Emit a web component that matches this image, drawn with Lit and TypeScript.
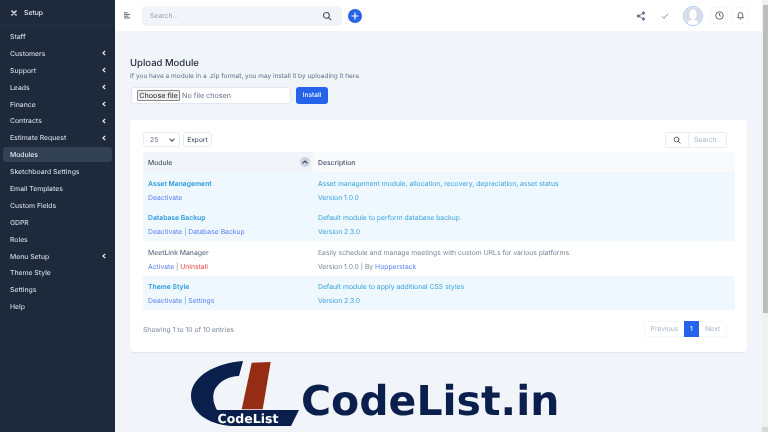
import { LitElement, css, html, svg } from 'lit';
import { customElement } from 'lit/decorators.js';

const menu: [string, boolean][] = [
  ['Staff', false],
  ['Customers', true],
  ['Support', true],
  ['Leads', true],
  ['Finance', true],
  ['Contracts', true],
  ['Estimate Request', true],
  ['Modules', false],
  ['Sketchboard Settings', false],
  ['Email Templates', false],
  ['Custom Fields', false],
  ['GDPR', false],
  ['Roles', false],
  ['Menu Setup', true],
  ['Theme Style', false],
  ['Settings', false],
  ['Help', false],
];

const searchIcon = (size: number) => html`<svg width=${size} height=${size} viewBox="0 0 24 24" fill="none" stroke="currentColor" stroke-width="2.6" stroke-linecap="round">
  <circle cx="10.5" cy="10.5" r="7"></circle><path d="M16 16l5.5 5.500"></path></svg>`;

@customElement('app-root')
export class AppRoot extends LitElement {
  renderSidebar() {
    return html`<aside class="side">
      <div class="side-head">
        <svg width="6" height="6" viewBox="0 0 10 10" stroke="#e2e8f0" stroke-width="2.4" stroke-linecap="round"><path d="M1.500 1.500l7 7M8.500 1.500l-7 7"></path></svg>
        <span>Setup</span>
      </div>
      <nav class="menu">
        ${menu.map(([label, sub]) => html`<div class="item ${label === 'Modules' ? 'on' : ''}">
          <span>${label}</span>
          ${sub ? html`<svg width="4" height="6" viewBox="0 0 5 7" fill="none" stroke="#e2e8f0" stroke-width="1.6"><path d="M4 .8L1.200 3.500 4 6.200"></path></svg>` : ''}
        </div>`)}
      </nav>
    </aside>`;
  }

  renderHeader() {
    return html`<header class="top">
      <svg class="burger" width="7" height="7" viewBox="0 0 8 8" stroke="#475569" stroke-width="1"><path d="M0 .8h4M0 2.800h7M0 4.800h5M0 6.800h7"></path></svg>
      <div class="search">
        <span>Search...</span>
        ${searchIcon(10)}
      </div>
      <div class="plus">
        <svg width="8" height="8" viewBox="0 0 8 8" stroke="#fff" stroke-width="1.2"><path d="M4 .5v7M.5 4h7"></path></svg>
      </div>
      <div class="grow"></div>
      <svg class="tool" width="10" height="10" viewBox="0 0 24 24" fill="#64748b" stroke="#64748b" stroke-width="2">
        <circle cx="18" cy="5" r="3"></circle><circle cx="6" cy="12" r="3"></circle><circle cx="18" cy="19" r="3"></circle><path d="M8.500 10.700l7-4.200M8.500 13.300l7 4.200"></path>
      </svg>
      <svg class="tool check" width="8" height="8" viewBox="0 0 24 24" fill="none" stroke="#475569" stroke-width="2"><path d="M3 13l6 6L21 5"></path></svg>
      <div class="avatar">
        <svg width="18" height="18" viewBox="0 0 17 17"><circle cx="8.500" cy="8.500" r="8.500" fill="#d5dce8"></circle><ellipse cx="8.500" cy="7" rx="3.400" ry="5" fill="#fff"></ellipse><path d="M2.500 17c.5-3.500 3-5 6-5s5.500 1.500 6 5z" fill="#fff"></path></svg>
      </div>
      <div class="ring">
        <svg width="9" height="9" viewBox="0 0 24 24" fill="none" stroke="#475569" stroke-width="2.400"><circle cx="12" cy="12" r="10"></circle><path d="M12 6v6l4 2"></path></svg>
      </div>
      <div class="ring">
        <svg width="9" height="9" viewBox="0 0 24 24" fill="none" stroke="#475569" stroke-width="2.400"><path d="M18 16V10a6 6 0 0 0-12 0v6l-2 2h16z"></path><path d="M10 21.500h4"></path></svg>
      </div>
    </header>`;
  }

  renderTable() {
    return html`<table>
      <colgroup><col class="c1" /><col /></colgroup>
      <thead><tr>
        <th class="sorted"><span>Module</span><i class="sort"><svg width="6" height="4" viewBox="0 0 6 4" fill="none" stroke="#334155" stroke-width="1.200"><path d="M.6 3.400L3 1l2.400 2.400"></path></svg></i></th>
        <th>Description</th>
      </tr></thead>
      <tbody>
        <tr class="active">
          <td><b>Asset Management</b><p><a>Deactivate</a></p></td>
          <td><div class="desc">Asset management module, allocation, recovery, depreciation, asset status</div><p>Version 1.0.0</p></td>
        </tr>
        <tr class="active">
          <td><b>Database Backup</b><p><a>Deactivate</a> | <a>Database Backup</a></p></td>
          <td><div class="desc">Default module to perform database backup</div><p>Version 2.3.0</p></td>
        </tr>
        <tr>
          <td><b>MeetLink Manager</b><p><a>Activate</a> | <a class="red">Uninstall</a></p></td>
          <td><div class="desc">Easily schedule and manage meetings with custom URLs for various platforms.</div><p>Version 1.0.0 | By <a>Hopperstack</a></p></td>
        </tr>
        <tr class="active">
          <td><b>Theme Style</b><p><a>Deactivate</a> | <a>Settings</a></p></td>
          <td><div class="desc">Default module to apply additional CSS styles</div><p>Version 2.3.0</p></td>
        </tr>
      </tbody>
    </table>`;
  }

  renderLogo() {
    return html`<div class="brand">
      <div class="mark">
        <svg width="108" height="65" viewBox="0 0 108 65">
          ${svg`<path d="M52 0 C25 2 0 15 0 35 C0 50 15 63 40 65 L100 65 L108 49 L26 49 C22 42 21 35 24 28 C29 20 38 15 48 15 Z" fill="#0b1f4d"></path>
          <path d="M60.700 1.700 L79.700 1 L71.700 48.300 L50.700 48.300 Z" fill="#952d14"></path>`}
        </svg>
        <span>CodeList</span>
      </div>
      <div class="word">CodeList.in</div>
    </div>`;
  }

  render() {
    return html`<div class="page">
      ${this.renderSidebar()}
      <div class="main">
        ${this.renderHeader()}
        <div class="body">
          <h1>Upload Module</h1>
          <div class="hint">If you have a module in a .zip format, you may install it by uploading it here.</div>
          <div class="upload">
            <div class="file"><span class="choose">Choose file</span><span>No file chosen</span></div>
            <div class="install">Install</div>
          </div>
          <section class="card">
            <div class="tools">
              <div class="select"><span>25</span><svg width="6" height="4" viewBox="0 0 6 4" fill="none" stroke="#475569" stroke-width="1.100"><path d="M.5.700L3 3.200 5.500.700"></path></svg></div>
              <div class="export">Export</div>
              <div class="grow"></div>
              <div class="find"><span class="lens">${searchIcon(8)}</span><span class="ph">Search..</span></div>
            </div>
            ${this.renderTable()}
            <div class="foot">
              <span>Showing 1 to 10 of 10 entries</span>
              <div class="pager"><span class="prev">Previous</span><span class="cur">1</span><span class="next">Next</span></div>
            </div>
          </section>
          ${this.renderLogo()}
        </div>
      </div>
      <div class="scrollbar"><div class="arrow up"></div><div class="thumb"></div><div class="grow"></div><div class="arrow down"></div></div>
    </div>`;
  }

  static styles = css`
    :host {
      display: block;
      font-family: Inter, "Liberation Sans", sans-serif;
      font-size: 6.800px;
      color: #475569;
      text-rendering: geometricPrecision;
    }
    .page {
      display: flex;
      width: 768px;
      height: 432px;
      overflow: hidden;
      background: #f1f5f9;
      filter: blur(0.35px);
    }
    .grow { flex: 1; }

    .side {
      width: 115px;
      flex: none;
      background: #1e293b;
      color: #e2e8f0;
      box-sizing: border-box;
    }
    .side-head {
      height: 26px;
      box-sizing: border-box;
      display: flex;
      align-items: center;
      gap: 7px;
      padding-left: 11px;
      border-bottom: 1px solid #243044;
      font-weight: 500;
    }
    .menu { padding: 3.200px 3px 0; }
    .item {
      height: 14.500px;
      margin-bottom: 2.400px;
      display: flex;
      align-items: center;
      justify-content: space-between;
      padding: 0 6px 0 7px;
      border-radius: 3px;
      color: #cbd5e1;
      font-weight: 500;
    }
    .item.on { background: #334155; color: #e2e8f0; }

    .main { flex: 1; min-width: 0; display: flex; flex-direction: column; }
    .top {
      height: 31px;
      flex: none;
      background: #fff;
      display: flex;
      align-items: center;
      padding-right: 13px;
      box-sizing: border-box;
    }
    .burger { margin-left: 9px; }
    .search {
      width: 200px;
      height: 20px;
      margin-left: 11px;
      padding: 0 10px 0 8px;
      box-sizing: border-box;
      border-radius: 4px;
      background: #f1f5f9;
      color: #94a3b8;
      display: flex;
      align-items: center;
      justify-content: space-between;
    }
    .search svg { color: #475569; }
    .plus {
      width: 14px;
      height: 14px;
      margin-left: 6px;
      border-radius: 50%;
      background: #2563eb;
      display: flex;
      align-items: center;
      justify-content: center;
    }
    .check { margin-left: 15px; }
    .avatar {
      width: 20px;
      height: 20px;
      margin: 0 7px 0 14px;
      box-sizing: border-box;
      border: 1px solid #a6c5f7;
      border-radius: 50%;
      display: flex;
      align-items: center;
      justify-content: center;
      overflow: hidden;
    }
    .ring {
      width: 18px;
      height: 17px;
      margin-right: 3px;
      box-sizing: border-box;
      border: 1px solid #f4f6f9;
      border-radius: 4px;
      display: flex;
      align-items: center;
      justify-content: center;
    }
    .ring:last-child { margin-right: 0; }

    .body { flex: 1; padding: 26px 15px 0; }
    h1 {
      margin: 0;
      font-size: 9.500px;
      line-height: 13px;
      font-weight: 500;
      color: #1e293b;
    }
    .hint { margin-top: 2px; font-size: 6.500px; line-height: 9px; color: #64748b; }
    .upload { display: flex; gap: 5px; margin: 6px 0 0 1px; height: 16.500px; }
    .file {
      width: 160px;
      background: #fff;
      border: 1px solid #e2e8f0;
      border-radius: 3px;
      box-sizing: border-box;
      display: flex;
      align-items: center;
      gap: 2px;
      padding-left: 5px;
      font-size: 7.200px;
      color: #64748b;
    }
    .choose {
      width: 43px;
      height: 11.500px;
      line-height: 9.500px;
      text-align: center;
      background: #efefef;
      border: 1px solid #8a8a8a;
      border-radius: 1px;
      color: #222;
      box-sizing: border-box;
    }
    .install {
      width: 32px;
      border-radius: 3px;
      background: #2563eb;
      color: #fff;
      font-weight: 500;
      font-size: 6.500px;
      display: flex;
      align-items: center;
      justify-content: center;
    }

    .card {
      margin-top: 16.500px;
      height: 232px;
      box-sizing: border-box;
      padding: 12px 12px 0 13px;
      background: #fff;
      border-radius: 4px;
      box-shadow: 0 1px 1px #e2e8f0;
    }
    .tools { display: flex; align-items: center; gap: 3px; height: 15px; margin-right: 8px; }
    .select {
      width: 37px;
      height: 15px;
      box-sizing: border-box;
      padding: 0 4px 0 6px;
      border: 1px solid #e8edf3;
      border-radius: 3px;
      display: flex;
      align-items: center;
      justify-content: space-between;
      color: #64748b;
    }
    .export {
      height: 15px;
      width: 29px;
      box-sizing: border-box;
      border: 1px solid #e8edf3;
      border-radius: 3px;
      display: flex;
      align-items: center;
      justify-content: center;
      font-weight: 500;
      font-size: 6.500px;
    }
    .find {
      display: flex;
      width: 62px;
      height: 16px;
      box-sizing: border-box;
      border: 1px solid #e8edf3;
      border-radius: 3px;
    }
    .lens {
      width: 22px;
      border-right: 1px solid #e8edf3;
      display: flex;
      align-items: center;
      justify-content: center;
      color: #475569;
    }
    .ph { padding-left: 5px; line-height: 14px; color: #a9b5c6; }

    table {
      width: 592px;
      margin-top: 5px;
      border-collapse: collapse;
      table-layout: fixed;
    }
    .c1 { width: 170px; }
    th {
      height: 20px;
      padding: 0 5px;
      background: #f8fafc;
      text-align: left;
      font-weight: 500;
      color: #475569;
    }
    th.sorted { background: #f1f5f9; position: relative; }
    .sort {
      position: absolute;
      right: 3px;
      top: 5px;
      width: 10px;
      height: 10px;
      border-radius: 50%;
      background: #cbd5e1;
      display: flex;
      align-items: center;
      justify-content: center;
    }
    td { height: 34.500px; padding: 0 5px; color: #7b8799; vertical-align: top; }
    td b { display: block; margin-top: 6.500px; font-weight: 500; line-height: 9px; color: #64748b; }
    .desc { margin-top: 6.500px; line-height: 9px; }
    td p { margin: 5.200px 0 0; line-height: 9px; }
    td a { color: #5b7ff5; }
    td a.red { color: #ef4444; }
    .active td { background: #eff8ff; color: #38a3e0; }
    .active td b { font-weight: 600; color: #2f9bdc; }

    .foot {
      display: flex;
      align-items: center;
      justify-content: space-between;
      margin: 11px 8px 0 0;
      color: #7b8799;
    }
    .pager {
      display: flex;
      height: 16px;
      border: 1px solid #f4f6f9;
      box-sizing: border-box;
      border-radius: 3px;
      color: #a9b5c6;
      line-height: 14px;
      text-align: center;
    }
    .prev { width: 39px; }
    .next { width: 27px; }
    .cur { width: 15px; background: #2563eb; color: #fff; margin: -1px 0; line-height: 16px; height: 16px; }

    .brand { display: flex; align-items: flex-end; margin: 9px 0 0 61px; }
    .mark { position: relative; width: 108px; height: 65px; flex: none; }
    .mark svg { display: block; }
    .mark span {
      position: absolute;
      left: 26.500px;
      top: 50px;
      font: bold 12.500px/15px "DejaVu Sans", sans-serif;
      color: #fff;
    }
    .word {
      margin: 0 0 0 2px;
      font: bold 41px/50px "DejaVu Sans", sans-serif;
      color: #0b1f4d;
      white-space: nowrap;
    }

    .scrollbar {
      width: 6px;
      flex: none;
      background: #f1f1f1;
      display: flex;
      flex-direction: column;
      align-items: center;
    }
    .thumb { width: 5px; height: 308px; background: #bdbdbd; flex: none; }
    .arrow { height: 5px; width: 6px; flex: none; }
    .arrow.down { background: #d8d8d8; }
  `;
}

declare global {
  interface HTMLElementTagNameMap {
    'app-root': AppRoot
  }
}
